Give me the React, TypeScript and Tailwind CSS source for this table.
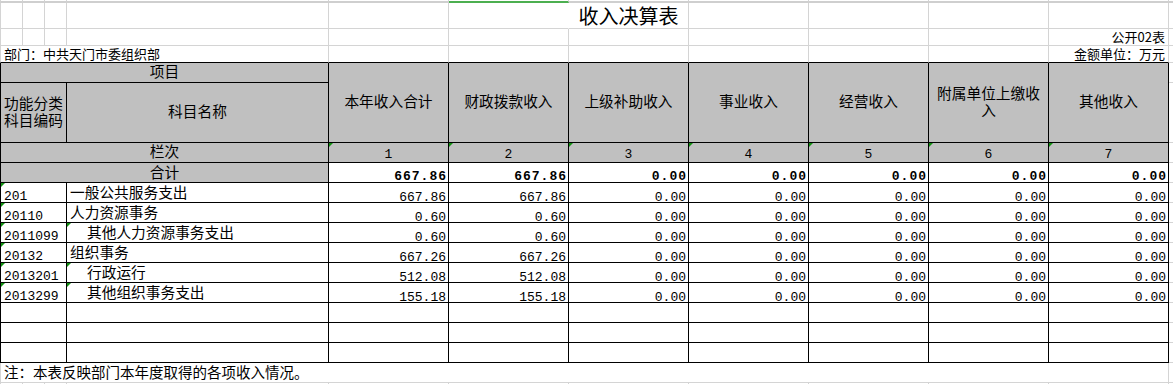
import React from "react";

const cjk = "font-['Noto_Sans_CJK_SC',sans-serif]";
const mono = "font-['Liberation_Mono',monospace]";
const gR = "border-r border-r-[#d4d4d4]";
const gB = "border-b border-b-[#d4d4d4]";
const gL = "border-l border-l-[#d4d4d4]";
const kR = "border-r border-r-black";
const kB = "border-b border-b-black";
const kL = "border-l border-l-black";
const hdr = "bg-[#c0c0c0]";

const Tri = () => (
  <span className="absolute left-0 top-0 h-0 w-0 border-t-[4px] border-r-[4px] border-t-[#129112] border-r-transparent" />
);

const heads = ["本年收入合计", "财政拨款收入", "上级补助收入", "事业收入", "经营收入", "附属单位上缴收入", "其他收入"];
const totals = ["667.86", "667.86", "0.00", "0.00", "0.00", "0.00", "0.00"];

const rows: { code: string; name: string; lvl: number; a: string; b: string }[] = [
  { code: "201", name: "一般公共服务支出", lvl: 0, a: "667.86", b: "667.86" },
  { code: "20110", name: "人力资源事务", lvl: 0, a: "0.60", b: "0.60" },
  { code: "2011099", name: "其他人力资源事务支出", lvl: 1, a: "0.60", b: "0.60" },
  { code: "20132", name: "组织事务", lvl: 0, a: "667.26", b: "667.26" },
  { code: "2013201", name: "行政运行", lvl: 1, a: "512.08", b: "512.08" },
  { code: "2013299", name: "其他组织事务支出", lvl: 1, a: "155.18", b: "155.18" },
];

const cols = [0, 1, 2, 3, 4, 5, 6, 7, 8, 9, 10];

export default function App() {
  return (
    <div className="h-[384px] w-[1173px] overflow-hidden bg-white text-black">
      <div className="grid grid-cols-[23px_22px_22px_262px_120px_120px_120px_120px_120px_120px_120px_5px] grid-rows-[3px_26px_17px_17px_20px_60px_20px_20px_20px_20px_20px_20px_20px_20px_20px_20px_20px_20px_20px]">
        {/* strip */}
        {cols.map((i) => (
          <div
            key={"s" + i}
            className={
              gR +
              " border-b-2 " +
              (i === 5 ? "border-b-[#4caf50]" : "border-b-[#cfcfcf]") +
              (i === 0 ? " " + gL : "")
            }
          />
        ))}
        <div className="border-b-2 border-b-[#cfcfcf]" />

        {/* title row */}
        {cols.map((i) =>
          i === 6 ? (
            <div key={"t" + i} className={`${gR} ${gB} flex items-end justify-center pb-[2px] text-[20px] leading-none ${cjk}`}>
              收入决算表
            </div>
          ) : (
            <div
              key={"t" + i}
              className={(i === 5 ? "border-r border-r-white" : gR) + " " + gB + (i === 0 ? " " + gL : "")}
            />
          )
        )}
        <div className={gB} />

        {/* row 2 */}
        {cols.map((i) =>
          i === 10 ? (
            <div key={"r2" + i} className={`${gR} ${gB} flex items-end justify-end pb-[2px] pr-[3px] text-[13px] leading-none ${cjk}`}>
              公开02表
            </div>
          ) : (
            <div key={"r2" + i} className={gR + " " + gB + (i === 0 ? " " + gL : "")} />
          )
        )}
        <div className={gB} />

        {/* row 3 */}
        <div className={`col-span-4 ${gL} ${gR} ${kB} flex items-end whitespace-nowrap pb-[2px] pl-[3px] text-[13px] leading-none ${cjk}`}>
          部门：中共天门市委组织部
        </div>
        {[4, 5, 6, 7, 8, 9].map((i) => (
          <div key={"r3" + i} className={gR + " " + kB} />
        ))}
        <div className={`${gR} ${kB} flex items-end justify-end pb-[2px] pr-[3px] text-[13px] leading-none ${cjk}`}>
          金额单位：万元
        </div>
        <div className={gB} />

        {/* header row 4 */}
        <div className={`col-span-4 ${hdr} ${kL} ${kR} ${kB} flex items-center justify-center pb-[3px] text-[14.7px] leading-none ${cjk}`}>
          项目
        </div>
        {heads.map((h, i) => (
          <div
            key={"h" + i}
            className={`row-span-2 ${hdr} ${kR} ${kB} flex flex-col items-center justify-center gap-[2px] pb-[2px] text-center text-[14.7px] leading-none ${cjk}`}
          >
            {h === "附属单位上缴收入" ? (
              <>
                <div>附属单位上缴收</div>
                <div>入</div>
              </>
            ) : (
              <div>{h}</div>
            )}
          </div>
        ))}
        <div className={gB} />

        {/* header row 5 */}
        <div className={`col-span-3 ${hdr} ${kL} ${kR} ${kB} flex flex-col items-center justify-center gap-[2px] pb-[2px] text-center text-[14.7px] leading-none ${cjk}`}>
          <div>功能分类</div>
          <div>科目编码</div>
        </div>
        <div className={`${hdr} ${kR} ${kB} flex items-center justify-center pb-[2px] text-[14.7px] leading-none ${cjk}`}>
          科目名称
        </div>
        <div className={gB} />

        {/* 栏次 */}
        <div className={`col-span-4 ${hdr} ${kL} ${kR} ${kB} flex items-end justify-center pb-[3px] text-[14.7px] leading-none ${cjk}`}>
          栏次
        </div>
        {heads.map((_, i) => (
          <div
            key={"n" + i}
            className={`relative ${hdr} ${kR} ${kB} flex items-end justify-center pb-[3px] text-[13px] leading-[9px] ${mono}`}
          >
            <Tri />
            {i + 1}
          </div>
        ))}
        <div className={gB} />

        {/* 合计 */}
        <div className={`col-span-4 ${hdr} ${kL} ${kR} ${kB} flex items-end justify-center pb-[2px] text-[14.7px] leading-none ${cjk}`}>
          合计
        </div>
        {totals.map((v, i) => (
          <div
            key={"tot" + i}
            className={`${kR} ${kB} flex items-end justify-end pb-[1px] pr-[1px] text-[13px] font-bold leading-[9px] tracking-[1px] ${mono}`}
          >
            {v}
          </div>
        ))}
        <div className={gB} />

        {/* data rows */}
        {rows.map((r) => (
          <React.Fragment key={r.code}>
            <div className={`relative col-span-3 ${kL} ${kR} ${kB} flex items-end pb-[1px] pl-[3px] text-[13px] leading-[9px] ${mono}`}>
              <Tri />
              {r.code}
            </div>
            <div
              className={`relative ${kR} ${kB} flex items-end whitespace-nowrap pb-[2px] text-[14.7px] leading-none ${cjk} ${
                r.lvl === 1 ? "pl-[20px]" : "pl-[3px]"
              }`}
            >
              {r.lvl === 1 ? <Tri /> : null}
              {r.name}
            </div>
            {[r.a, r.b, "0.00", "0.00", "0.00", "0.00", "0.00"].map((v, i) => (
              <div
                key={r.code + "v" + i}
                className={`${kR} ${kB} flex items-end justify-end pr-[2px] text-[13px] leading-[9px] ${mono}`}
              >
                {v}
              </div>
            ))}
            <div className={gB} />
          </React.Fragment>
        ))}

        {/* empty rows */}
        {[0, 1, 2].map((e) => (
          <React.Fragment key={"e" + e}>
            <div className={`col-span-3 ${kL} ${kR} ${kB}`} />
            <div className={`${kR} ${kB}`} />
            {[0, 1, 2, 3, 4, 5, 6].map((i) => (
              <div key={"e" + e + "c" + i} className={`${kR} ${kB}`} />
            ))}
            <div className={gB} />
          </React.Fragment>
        ))}

        {/* note row */}
        <div className={`col-span-11 ${gL} ${gR} ${gB} flex items-end pb-[3px] pl-[3px] text-[14.5px] leading-none ${cjk}`}>
          注：本表反映部门本年度取得的各项收入情况。
        </div>
        <div className={gB} />

        {/* last row */}
        {cols.map((i) => (
          <div key={"l" + i} className={gR + (i === 0 ? " " + gL : "")} />
        ))}
        <div />
      </div>
    </div>
  );
}
